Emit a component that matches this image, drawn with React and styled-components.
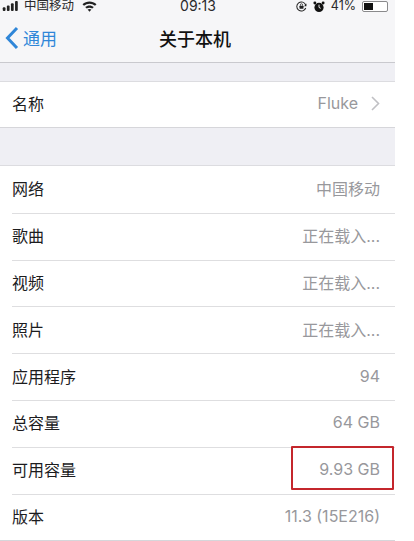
import React from 'react'
import styled, { createGlobalStyle } from 'styled-components'

const GlobalStyle = createGlobalStyle`
  html, body {
    margin: 0;
    padding: 0;
    background: #fff;
    font-family: Inter, "Noto Sans CJK SC", sans-serif;
  }
`

const Screen = styled.div`
  position: relative;
  width: 395px;
  height: 541px;
  overflow: hidden;
  background: #efeff4;
`

const TopBar = styled.div`
  display: flow-root;
  background: #f6f6f8;
  border-bottom: 1px solid #c9c9ce;
  height: 63px;
  box-sizing: border-box;
`

const StatusBar = styled.div`
  height: 12px;
  display: grid;
  grid-template-columns: 1fr auto 1fr;
  grid-template-rows: 12px;
  align-items: center;
  padding: 0 1px 0 2px;
  font-size: 12.5px;
  line-height: 12px;
  color: #2a2a2c;
`

const StatusTime = styled.span`
  font-size: 14px;
`

const StatusSide = styled.div`
  display: flex;
  align-items: center;
  gap: ${({ $gap }) => $gap || 5}px;
  justify-content: ${({ $end }) => ($end ? 'flex-end' : 'flex-start')};
  padding-right: ${({ $end }) => ($end ? 6 : 0)}px;
`

const Carrier = styled.span`
  margin-right: 3px;
`

const NavBar = styled.div`
  display: grid;
  grid-template-columns: 1fr auto 1fr;
  align-items: center;
  height: 47px;
  margin-top: 2px;
  padding: 0 10px 0 5px;
`

const BackLink = styled.div`
  display: flex;
  align-items: center;
  gap: 4px;
  color: #2f86d8;
  font-size: 17px;
`

const NavTitle = styled.div`
  font-size: 18px;
  font-weight: 500;
  color: #111;
`

const Gap = styled.div`
  height: ${({ $h }) => $h}px;
`

const Group = styled.div`
  background: #fff;
  border-top: 1px solid #dcdce0;
  border-bottom: 1px solid #d6d6da;
`

const Row = styled.div`
  display: flex;
  align-items: center;
  justify-content: space-between;
  height: ${({ $h }) => $h || 46.8}px;
  box-sizing: border-box;
  margin-left: 12px;
  padding: 0 15px 3px 0;
  border-top: ${({ $first }) => ($first ? 'none' : '1px solid #dedee0')};
`

const Label = styled.span`
  font-size: 16px;
  color: #1c1c1e;
`

const Value = styled.span`
  display: flex;
  align-items: center;
  gap: 13px;
  font-size: 16px;
  color: #98989c;
`

const Highlight = styled.div`
  position: absolute;
  left: 291px;
  top: 446px;
  width: 103px;
  height: 44px;
  box-sizing: border-box;
  border: 2px solid #c4262c;
  border-radius: 1px;
`

const BatteryBody = styled.div`
  width: 26px;
  height: 11px;
  box-sizing: border-box;
  border: 1px solid #8a8a8c;
  border-radius: 2px;
  padding: 1px;
  background: #fff;
`

const BatteryFill = styled.div`
  height: 100%;
  width: 41%;
  background: #111;
`

const rows = [
  ['网络', '中国移动'],
  ['歌曲', '正在载入...'],
  ['视频', '正在载入...'],
  ['照片', '正在载入...'],
  ['应用程序', '94'],
  ['总容量', '64 GB'],
  ['可用容量', '9.93 GB'],
  ['版本', '11.3 (15E216)'],
]

const Signal = () => (
  <svg width="17" height="10" viewBox="0 0 17 11">
    <rect x="0" y="7" width="3" height="4" rx="1" fill="#222" />
    <rect x="4.5" y="5" width="3" height="6" rx="1" fill="#222" />
    <rect x="9" y="2.5" width="3" height="8.5" rx="1" fill="#222" />
    <rect x="13.5" y="0" width="3" height="11" rx="1" fill="#222" />
  </svg>
)

const Wifi = () => (
  <svg width="15" height="11" viewBox="0 0 15 11">
    <path d="M0.5 3.2C4.5-0.4 10.5-0.4 14.5 3.2L13 4.8C9.8 2 5.2 2 2 4.8Z" fill="#222" />
    <path d="M3.2 6C5.6 3.9 9.4 3.9 11.8 6L10.3 7.6C8.7 6.3 6.3 6.3 4.7 7.6Z" fill="#222" />
    <path d="M5.6 8.5C6.7 7.7 8.3 7.7 9.4 8.5L7.5 10.8Z" fill="#222" />
  </svg>
)

const RotationLock = () => (
  <svg width="11" height="11" viewBox="0 0 12 12">
    <path d="M10.6 7.6A5 5 0 1 1 10.6 4.4" fill="none" stroke="#222" strokeWidth="1.1" />
    <path d="M11.4 2.8V5.6H8.8Z" fill="#222" />
    <rect x="3.8" y="5.2" width="4.4" height="3.2" rx="0.5" fill="#222" />
    <path d="M4.8 5.2V4.2a1.2 1.2 0 0 1 2.4 0V5.2" fill="none" stroke="#222" strokeWidth="0.8" />
  </svg>
)

const Alarm = () => (
  <svg width="12" height="11" viewBox="0 0 13 12">
    <circle cx="6.5" cy="7" r="5" fill="#111" />
    <circle cx="2" cy="2.2" r="1.6" fill="#111" />
    <circle cx="11" cy="2.2" r="1.6" fill="#111" />
    <path d="M6.5 4V7L8.4 8" fill="none" stroke="#fff" strokeWidth="1" />
  </svg>
)

const BackChevron = () => (
  <svg width="14" height="24" viewBox="0 0 14 24">
    <path d="M12 2L2.5 12L12 22" fill="none" stroke="#2f86d8" strokeWidth="3" />
  </svg>
)

const RowChevron = () => (
  <svg width="9" height="15" viewBox="0 0 9 15">
    <path d="M1 1L7.5 7.5L1 14" fill="none" stroke="#c0c0c4" strokeWidth="1.6" />
  </svg>
)

export default function App() {
  return (
    <Screen>
      <GlobalStyle />
      <TopBar>
        <StatusBar>
          <StatusSide>
            <Signal />
            <Carrier>中国移动</Carrier>
            <Wifi />
          </StatusSide>
          <StatusTime>09:13</StatusTime>
          <StatusSide $end $gap={6}>
            <RotationLock />
            <Alarm />
            <span>41%</span>
            <BatteryBody>
              <BatteryFill />
            </BatteryBody>
          </StatusSide>
        </StatusBar>
        <NavBar>
          <BackLink>
            <BackChevron />
            <span>通用</span>
          </BackLink>
          <NavTitle>关于本机</NavTitle>
          <span />
        </NavBar>
      </TopBar>
      <Gap $h={18} />
      <Group>
        <Row $first $h={45}>
          <Label>名称</Label>
          <Value>
            Fluke
            <RowChevron />
          </Value>
        </Row>
      </Group>
      <Gap $h={37} />
      <Group>
        {rows.map(([label, value], i) => (
          <Row key={label} $first={i === 0}>
            <Label>{label}</Label>
            <Value>{value}</Value>
          </Row>
        ))}
      </Group>
      <Highlight />
    </Screen>
  )
}
